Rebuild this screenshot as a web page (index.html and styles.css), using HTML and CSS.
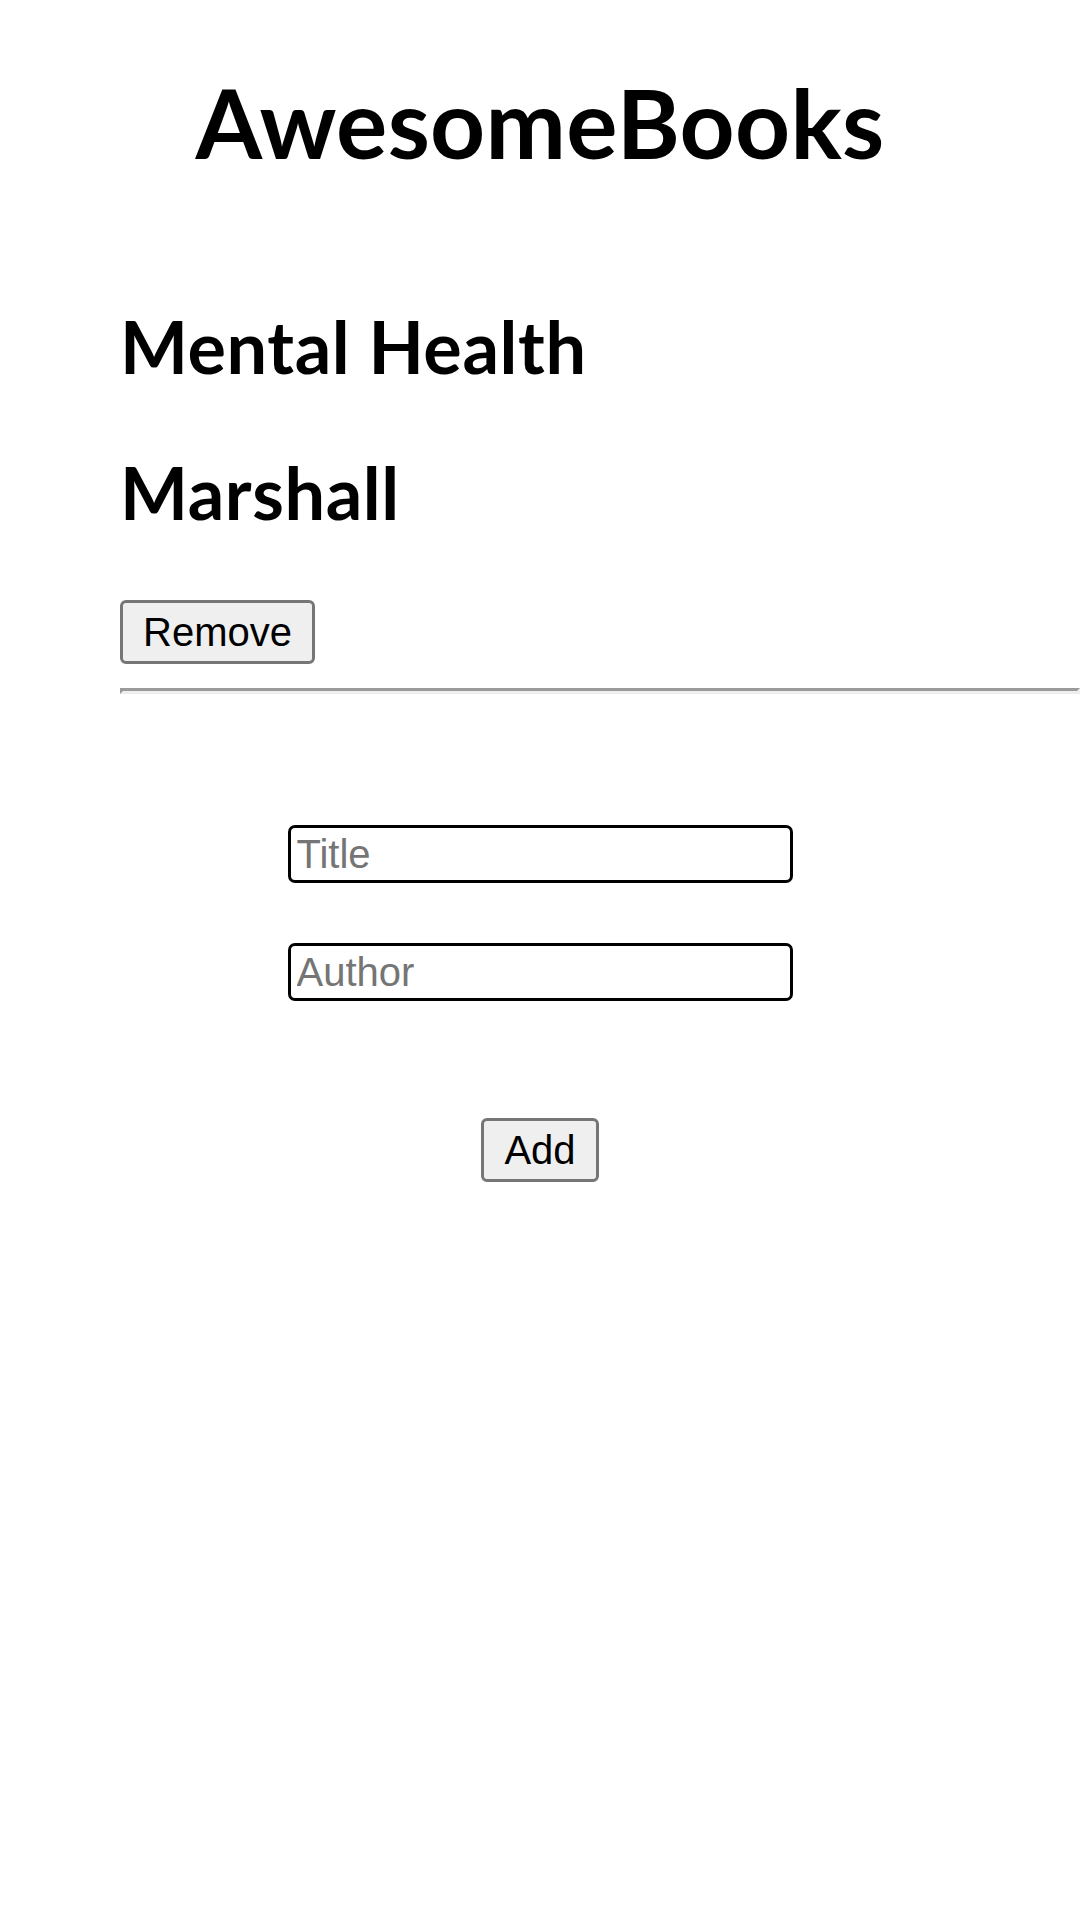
FILE: index.html
```html
<!DOCTYPE html>
<html lang="en">
<head>
<meta charset="utf-8">
<title>AwesomeBooks</title>
<link rel="stylesheet" href="styles.css">
</head>
<body>
<h1 class="title">AwesomeBooks</h1>
<ul class="books">
  <li class="book">
    <h2 class="book-title">Mental Health</h2>
    <h2 class="book-author">Marshall</h2>
    <div class="book-actions"><button class="btn" type="button">Remove</button></div>
    <hr class="divider">
  </li>
</ul>
<form class="add-form">
  <input class="field" type="text" placeholder="Title">
  <input class="field" type="text" placeholder="Author">
  <button class="btn btn-add" type="button">Add</button>
</form>
</body>
</html>
```
FILE: styles.css
```css
html, body {
  background: #ffffff;
}
body {
  margin: 0;
  font-family: Lato, "Noto Sans", sans-serif;
  font-size: 48px;
  color: #000;
}
.title {
  font-size: 96px;
  font-weight: 700;
  line-height: normal;
  letter-spacing: 0.3px;
  margin: 64px 0;
  text-align: center;
}
.books {
  display: flow-root;
  list-style: none;
  margin: 0;
  padding: 0 0 0 120px;
}
.book-title,
.book-author {
  font-size: 72px;
  font-weight: 700;
  line-height: normal;
  letter-spacing: 0.6px;
  margin: 59.76px 0;
}
.book-actions {
  line-height: normal;
  padding-top: 5px;
}
.btn {
  font-family: "Liberation Sans", Arial, sans-serif;
  font-size: 40px;
  line-height: 46px;
  padding: 6px 20px;
  border: 3px solid #767676;
  border-radius: 6px;
  background: #efefef;
  color: #000;
}
.divider {
  margin: 24px 0;
  height: 0;
  border-style: solid;
  border-width: 3px;
  border-color: #9a9a9a #eeeeee #eeeeee #9a9a9a;
}
.add-form {
  display: flex;
  flex-direction: column;
  align-items: center;
  gap: 60px;
  padding-top: 107px;
}
.field {
  box-sizing: border-box;
  width: 505px;
  height: 58px;
  padding: 3px 6px;
  border: 3px solid #000;
  border-radius: 7px;
  font-family: "Liberation Sans", Arial, sans-serif;
  font-size: 40px;
  color: #000;
  background: #fff;
}
.field::placeholder {
  color: #757575;
}
.btn-add {
  margin-top: 57px;
}
```
